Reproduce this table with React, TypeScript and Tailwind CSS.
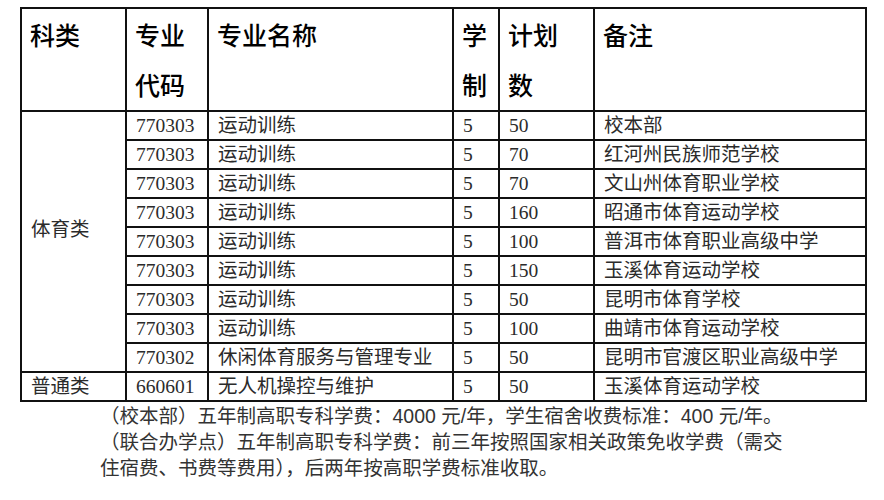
import React from "react";

type Row = { code: string; name: string; years: string; plan: string; note: string };

const sportsRows: Row[] = [
  { code: "770303", name: "运动训练", years: "5", plan: "50", note: "校本部" },
  { code: "770303", name: "运动训练", years: "5", plan: "70", note: "红河州民族师范学校" },
  { code: "770303", name: "运动训练", years: "5", plan: "70", note: "文山州体育职业学校" },
  { code: "770303", name: "运动训练", years: "5", plan: "160", note: "昭通市体育运动学校" },
  { code: "770303", name: "运动训练", years: "5", plan: "100", note: "普洱市体育职业高级中学" },
  { code: "770303", name: "运动训练", years: "5", plan: "150", note: "玉溪体育运动学校" },
  { code: "770303", name: "运动训练", years: "5", plan: "50", note: "昆明市体育学校" },
  { code: "770303", name: "运动训练", years: "5", plan: "100", note: "曲靖市体育运动学校" },
  { code: "770302", name: "休闲体育服务与管理专业", years: "5", plan: "50", note: "昆明市官渡区职业高级中学" },
];

const th = "border-2 border-[#111] align-top pl-[8px] pt-0 text-left font-medium text-[25px] leading-[50px] text-black whitespace-nowrap";
const td = "border-2 border-[#111] align-middle pl-[9px] text-[19.5px] leading-[24px] text-[#2b2b2b] whitespace-nowrap";

export default function App() {
  return (
    <div
      className="w-[884px] h-[500px] bg-white pt-[7px] pl-[20px]"
      style={{ fontFamily: '"Liberation Serif", "Noto Sans CJK SC", serif' }}
    >
      <table className="table-fixed border-collapse w-[845px]">
        <colgroup>
          <col className="w-[105px]" />
          <col className="w-[82px]" />
          <col className="w-[245px]" />
          <col className="w-[46px]" />
          <col className="w-[95px]" />
          <col className="w-[272px]" />
        </colgroup>
        <thead style={{ fontFamily: '"Noto Sans CJK SC", sans-serif' }}>
          <tr className="h-[103px]">
            <th className={th}>科类</th>
            <th className={th}>
              专业
              <br />
              代码
            </th>
            <th className={th}>专业名称</th>
            <th className={th}>
              学
              <br />
              制
            </th>
            <th className={th}>
              计划
              <br />
              数
            </th>
            <th className={th}>备注</th>
          </tr>
        </thead>
        <tbody>
          {sportsRows.map((r, i) => (
            <tr key={i} className="h-[29px]">
              {i === 0 && (
                <td rowSpan={9} className={td + " pb-[24px]"}>
                  体育类
                </td>
              )}
              <td className={td}>{r.code}</td>
              <td className={td}>{r.name}</td>
              <td className={td}>{r.years}</td>
              <td className={td}>{r.plan}</td>
              <td className={td}>{r.note}</td>
            </tr>
          ))}
          <tr className="h-[29px]">
            <td className={td}>普通类</td>
            <td className={td}>660601</td>
            <td className={td}>无人机操控与维护</td>
            <td className={td}>5</td>
            <td className={td}>50</td>
            <td className={td}>玉溪体育运动学校</td>
          </tr>
        </tbody>
      </table>

      <p
        className="ml-[80px] mt-[1px] text-[19.5px] leading-[26px] text-[#333] whitespace-nowrap"
        style={{ fontFamily: '"Liberation Sans", "Noto Sans CJK SC", sans-serif' }}
      >
        （校本部）五年制高职专科学费：4000 元/年，学生宿舍收费标准：400 元/年。
        <br />
        （联合办学点）五年制高职专科学费：前三年按照国家相关政策免收学费（需交
        <br />
        住宿费、书费等费用），后两年按高职学费标准收取。
      </p>
    </div>
  );
}
